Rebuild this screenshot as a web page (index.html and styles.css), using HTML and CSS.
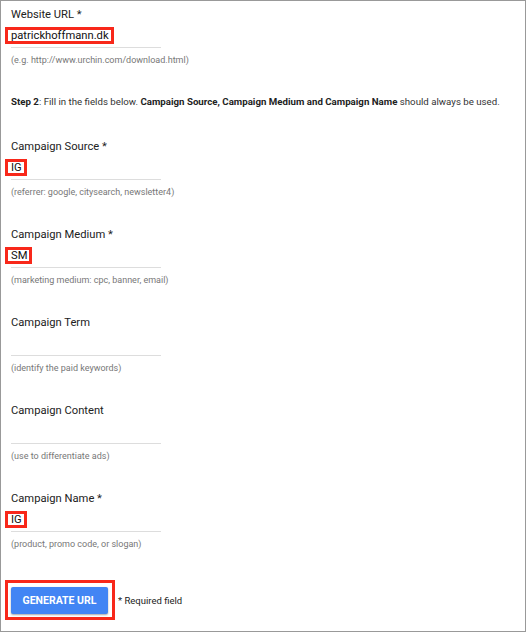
FILE: index.html
```html
<!DOCTYPE html>
<html lang="en">
<head>
  <meta charset="UTF-8" />
  <meta name="viewport" content="width=device-width, initial-scale=1.0"/>
  <title>Campaign URL Builder</title>
  <link rel="stylesheet" href="styles.css">
</head>
<body>

  <div class="builder">
    <div class="field">
      <div class="field-label">Website URL *</div>
      <div class="field-input"><span class="mark">patrickhoffmann.dk</span></div>
      <div class="field-hint">(e.g. http://www.urchin.com/download.html)</div>
    </div>

    <p class="step">
      <b>Step 2</b>: Fill in the fields below. <b>Campaign Source, Campaign Medium and Campaign Name</b> should always be used.
    </p>

    <div class="field">
      <div class="field-label">Campaign Source *</div>
      <div class="field-input"><span class="mark">IG</span></div>
      <div class="field-hint">(referrer: google, citysearch, newsletter4)</div>
    </div>

    <div class="field">
      <div class="field-label">Campaign Medium *</div>
      <div class="field-input"><span class="mark">SM</span></div>
      <div class="field-hint">(marketing medium: cpc, banner, email)</div>
    </div>

    <div class="field">
      <div class="field-label">Campaign Term</div>
      <div class="field-input"></div>
      <div class="field-hint">(identify the paid keywords)</div>
    </div>

    <div class="field">
      <div class="field-label">Campaign Content</div>
      <div class="field-input"></div>
      <div class="field-hint">(use to differentiate ads)</div>
    </div>

    <div class="field">
      <div class="field-label">Campaign Name *</div>
      <div class="field-input"><span class="mark">IG</span></div>
      <div class="field-hint">(product, promo code, or slogan)</div>
    </div>

    <div class="actions">
      <span class="mark-btn"><button type="button" class="btn-generate">GENERATE URL</button></span>
      <span class="required">* Required field</span>
    </div>
  </div>

</body>
</html>
```

FILE: styles.css
```css
* {
  box-sizing: border-box;
}

html {
  background: #fff;
}

body {
  font-family: 'Roboto', 'Liberation Sans', sans-serif;
  margin: 0;
  padding: 0;
  color: #222;
}

.builder {
  width: 526px;
  height: 632px;
  border: 1px solid #999;
  padding: 7px 10px;
  display: flex;
  flex-direction: column;
}

.field {
  display: flex;
  flex-direction: column;
  margin-bottom: 30px;
}

.field-label {
  font-size: 11.2px;
  line-height: 14px;
  color: #222;
}

.field-input {
  width: 150px;
  height: 26px;
  padding-top: 5px;
  border-bottom: 1px solid #ddd;
  font-size: 11.2px;
  color: #111;
}

.mark {
  display: inline-block;
  margin-left: -6px;
  padding: 0 2px 0 3px;
  border: 3px solid #f8281a;
  line-height: 11px;
  white-space: nowrap;
}

.field-hint {
  margin-top: 6px;
  font-size: 9px;
  line-height: 12px;
  color: #777;
}

.step {
  margin: 0 0 32px;
  font-size: 9.7px;
  line-height: 12px;
  color: #333;
}

.step b {
  color: #222;
}

.actions {
  display: flex;
  align-items: center;
  gap: 3px;
}

.mark-btn {
  display: inline-block;
  margin-left: -6px;
  padding: 4px 4px 3px 3px;
  border: 3px solid #f8281a;
}

.btn-generate {
  display: block;
  width: 97px;
  height: 27px;
  padding: 0;
  border: none;
  border-radius: 2px;
  background-color: #4285f4;
  box-shadow: 0 1px 2px rgba(0, 0, 0, 0.35);
  color: #fff;
  font-family: 'Roboto', 'Liberation Sans', sans-serif;
  font-size: 10.5px;
  font-weight: 700;
  cursor: pointer;
}

.required {
  font-size: 9.5px;
  color: #222;
}
```
